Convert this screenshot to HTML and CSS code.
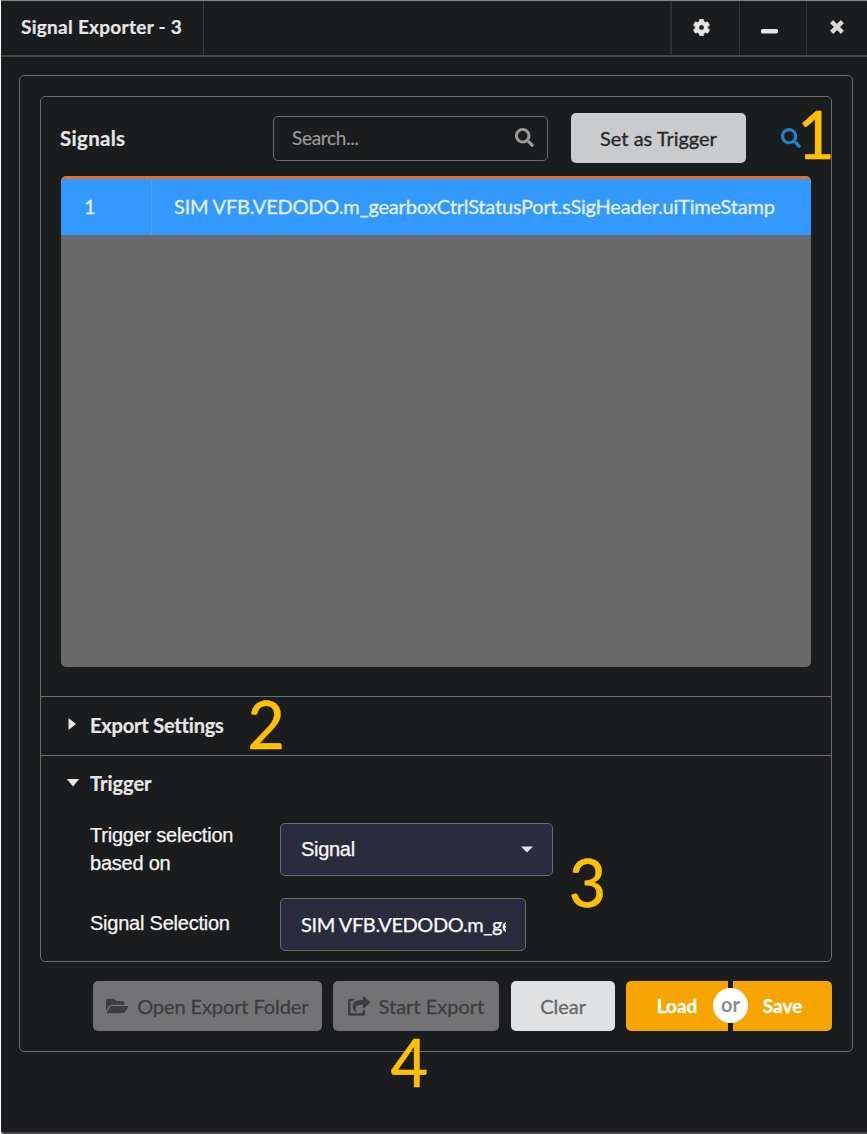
FILE: index.html
```html
<!DOCTYPE html>
<html lang="en">
<head>
<meta charset="utf-8">
<title>Signal Exporter - 3</title>
<link rel="stylesheet" href="styles.css">
</head>
<body>
<svg class="defs" width="0" height="0">
  <symbol id="search" viewBox="0 0 512 512"><path d="M505 442.700L405.300 343c-4.500-4.500-10.600-7-17-7H372c27.600-35.300 44-79.700 44-128C416 93.100 322.900 0 208 0S0 93.100 0 208s93.100 208 208 208c48.300 0 92.700-16.400 128-44v16.300c0 6.400 2.500 12.500 7 17l99.700 99.700c9.400 9.400 24.600 9.400 33.900 0l28.300-28.300c9.400-9.400 9.400-24.600.1-34zM208 336c-70.700 0-128-57.200-128-128 0-70.700 57.200-128 128-128 70.700 0 128 57.200 128 128 0 70.700-57.200 128-128 128z"/></symbol>
</svg>
<div class="window">
  <header class="titlebar">
    <div class="title"><span>Signal Exporter - 3</span></div>
    <div class="tool tool-settings"><svg width="17" height="17" viewBox="0 0 512 512"><path stroke="currentColor" stroke-width="22" d="M487.400 315.700l-42.600-24.600c4.300-23.200 4.300-47 0-70.200l42.600-24.600c4.900-2.800 7.100-8.600 5.500-14-11.100-35.600-30-67.800-54.700-94.600-3.800-4.100-10-5.100-14.800-2.300L380.800 110c-17.900-15.400-38.500-27.300-60.800-35.100V25.800c0-5.600-3.900-10.500-9.400-11.700-36.700-8.200-74.300-7.800-109.200 0-5.500 1.200-9.400 6.100-9.400 11.700V75c-22.200 7.900-42.800 19.800-60.800 35.100L88.700 85.500c-4.900-2.800-11-1.900-14.800 2.300-24.700 26.700-43.600 58.900-54.700 94.600-1.700 5.400.6 11.200 5.500 14L67.300 221c-4.300 23.200-4.300 47 0 70.200l-42.600 24.600c-4.900 2.800-7.100 8.600-5.500 14 11.100 35.600 30 67.800 54.700 94.600 3.800 4.100 10 5.100 14.800 2.300l42.600-24.600c17.900 15.400 38.500 27.300 60.800 35.100v49.200c0 5.600 3.900 10.500 9.400 11.700 36.700 8.200 74.300 7.800 109.200 0 5.500-1.200 9.400-6.100 9.400-11.700v-49.200c22.200-7.900 42.800-19.800 60.800-35.100l42.600 24.600c4.900 2.800 11 1.900 14.800-2.300 24.700-26.700 43.600-58.900 54.700-94.600 1.500-5.500-.7-11.300-5.600-14.100zM256 336c-44.100 0-80-35.900-80-80s35.900-80 80-80 80 35.900 80 80-35.900 80-80 80z"/></svg></div>
    <div class="tool tool-minimize"><svg width="17" height="17" viewBox="0 0 17 17"><rect x="0" y="11" width="17" height="4.500" rx="1.500"/></svg></div>
    <div class="tool tool-close"><svg width="14" height="14" viewBox="0 0 14 14"><path d="M3.200 3.200L10.800 10.800M10.800 3.200L3.200 10.800" fill="none" stroke="currentColor" stroke-width="4.400" stroke-linecap="square"/></svg></div>
  </header>

  <main class="panel">
    <div class="accordion">
      <section class="signals">
        <div class="signals-head">
          <h2 class="signals-label">Signals</h2>
          <div class="search"><span>Search...</span><svg width="19" height="19"><use href="#search"/></svg></div>
          <button class="btn btn-trigger">Set as Trigger</button>
          <svg class="find" width="20" height="20"><use href="#search"/></svg>
        </div>
        <div class="table">
          <div class="row">
            <div class="cell-index">1</div>
            <div class="cell-name"><span>SIM VFB.VEDODO.m_gearboxCtrlStatusPort.sSigHeader.uiTimeStamp</span></div>
          </div>
        </div>
      </section>
      <section class="export-settings">
        <svg class="caret" width="14" height="14" viewBox="0 0 14 14"><path d="M3.500 1L11 7L3.500 13Z"/></svg>
        <h3 class="heading heading-export">Export Settings</h3>
      </section>
      <section class="trigger">
        <div class="trigger-head">
          <svg class="caret" width="14" height="14" viewBox="0 0 14 14"><path d="M.8 3H13.200L7 10.500Z"/></svg>
          <h3 class="heading heading-trigger">Trigger</h3>
        </div>
        <div class="field">
          <label>Trigger selection<br>based on</label>
          <div class="select"><span>Signal</span><svg width="12" height="7" viewBox="0 0 12 7"><path d="M0 .5H12L6 6.500Z"/></svg></div>
        </div>
        <div class="field field-signal">
          <label>Signal Selection</label>
          <div class="input"><span>SIM VFB.VEDODO.m_ge</span></div>
        </div>
      </section>
    </div>
    <footer class="actions">
      <button class="btn btn-folder"><svg width="22" height="20" viewBox="0 0 576 512"><path d="M572.694 292.093L500.270 416.248A63.997 63.997 0 0 1 444.989 448H45.025c-18.523 0-30.064-20.093-20.731-36.093l72.424-124.155A64 64 0 0 1 152 256h399.964c18.523 0 30.064 20.093 20.730 36.093zM152 224h328v-48c0-26.510-21.490-48-48-48H272l-64-64H48C21.490 64 0 85.490 0 112v278.046l69.077-118.418C86.214 242.250 117.989 224 152 224z"/></svg><span>Open Export Folder</span></button>
      <button class="btn btn-start"><svg width="22" height="20" viewBox="0 0 576 512"><path d="M568.482 177.448L424.479 313.433C409.300 327.768 384 317.140 384 295.985v-71.963c-144.575.970-205.566 35.113-164.775 171.353 4.483 14.973-12.846 26.567-25.006 17.330C155.252 383.105 120 326.488 120 269.339c0-143.937 117.599-172.500 264-173.312V24.012c0-21.174 25.317-31.768 40.479-17.448l144.003 135.988c10.020 9.463 10.028 25.425 0 34.896zM384 379.128V448H64V128h50.916a11.990 11.990 0 0 0 8.648-3.693c14.953-15.568 32.237-27.890 51.014-37.676C185.708 80.830 181.584 64 169.033 64H48C21.490 64 0 85.490 0 112v352c0 26.510 21.490 48 48 48h352c26.510 0 48-21.490 48-48v-88.806c0-8.288-8.197-14.066-16.011-11.302a71.830 71.830 0 0 1-34.189 3.377c-7.270-1.046-13.800 4.514-13.800 11.859z"/></svg><span>Start Export</span></button>
      <button class="btn btn-clear">Clear</button>
      <div class="btn-pair">
        <button class="btn btn-load">Load</button>
        <button class="btn btn-save">Save</button>
        <div class="or"><span>or</span></div>
      </div>
    </footer>
  </main>

  <div class="callout callout-1">1</div>
  <div class="callout callout-2">2</div>
  <div class="callout callout-3">3</div>
  <div class="callout callout-4">4</div>
</div>
</body>
</html>
```
FILE: styles.css
```css
* { box-sizing: border-box; }
body { margin: 0; background: #fff; font-family: Lato, "Liberation Sans", sans-serif; font-size: 20px; color: #e6e6e6; font-variant-ligatures: none; }
.defs { display: block; position: absolute; }
svg { display: block; fill: currentColor; flex: none; }
h2, h3 { margin: 0; font-size: 20px; font-weight: 700; line-height: 28px; }
span, h2, h3, button { white-space: nowrap; }

.window { position: relative; width: 866px; height: 1134px; margin-left: 1px; background: #1b1c1d; border-top: 1px solid #858787; border-bottom: 2px solid #444446; border-bottom-left-radius: 3px; overflow: hidden; }
.titlebar { display: flex; height: 56px; border-bottom: 2px solid #474848; }
.title { width: 203px; padding: 12px 0 0 20px; border-right: 1px solid #373839; font-weight: 700; font-size: 19px; line-height: 28px; letter-spacing: .28px; -webkit-text-stroke: .2px; }
.tool { display: flex; border-left: 1px solid #323334; }
.tool-settings { width: 69px; margin-left: auto; border-left: 2px solid #303132; padding: 18px 0 0 21px; }
.tool-minimize { width: 67px; padding: 17px 0 0 21px; }
.tool-close { width: 61px; padding: 19px 0 0 23px; color: #d8d8d8; }

.panel { width: 834px; height: 977px; margin: 18px 0 0 18px; padding: 20px; border: 1px solid #6b6b6c; border-radius: 5px; }
.accordion { height: 866px; border: 1px solid #6b6b6c; border-radius: 5px; }
.signals { height: 600px; padding: 16px 20px 0 20px; border-bottom: 1px solid #6b6b6c; }
.signals-head { display: flex; height: 51px; }
.signals-label { width: 213px; padding-top: 11px; margin-left: -1px; font-size: 20.500px; letter-spacing: .3px; -webkit-text-stroke: .2px; }
.search { display: flex; justify-content: space-between; width: 275px; height: 45px; margin-top: 3px; padding: 11px 13px 0 18px; border: 1px solid #6b6b6c; border-radius: 5px; color: #999; }
.search span { line-height: 19px; font-size: 19px; letter-spacing: -.3px; -webkit-text-stroke: .2px; }
.btn { display: flex; align-items: center; justify-content: center; height: 50px; padding: 0; border: 0; border-radius: 5px; font: 400 20px/28px Lato, sans-serif; -webkit-text-stroke: .3px; }
.btn-trigger { width: 175px; margin: 0 0 0 23px; padding-bottom: 1px; background: #cacbcd; color: #272829; }
.find { margin: 15px 0 0 35px; color: #2280cb; }
.table { width: 750px; height: 491px; margin-top: 12px; background: #6a6a6a; border-top: 3px solid #e36f28; border-radius: 5px; overflow: hidden; }
.row { display: flex; height: 56px; background: #3399ff; color: #e3f1ff; line-height: 54px; -webkit-text-stroke: .3px; }
.cell-index { width: 91px; padding-left: 23px; border-right: 1px solid #4da4fb; }
.cell-name { padding-left: 22px; letter-spacing: -.2px; }

.export-settings { display: flex; height: 59px; padding: 14px 0 0 24px; border-bottom: 1px solid #6b6b6c; }
.heading { -webkit-text-stroke: .2px; }
.heading-export { letter-spacing: -.2px; }
.caret { margin: 6px 11px 0 0; }
.trigger { padding-top: 13px; }
.trigger-head { display: flex; padding-left: 25px; }
.trigger-head .caret { margin: 7px 10px 0 0; }
.field { display: flex; margin: 26px 0 0 49px; }
.field label { width: 190px; font: 400 20px/28px "Liberation Sans", sans-serif; letter-spacing: -.23px; color: #f5f5f5; margin-top: -2px; -webkit-text-stroke: .25px; }
.select, .input { display: flex; justify-content: space-between; height: 53px; padding: 0 19px 0 20px; border: 1px solid #6b6b6c; border-radius: 5px; background: #2a2c3e; color: #fafafa; line-height: 51px; -webkit-text-stroke: .25px; }
.select { width: 273px; font-family: "Liberation Sans", sans-serif; letter-spacing: -.3px; }
.select svg { margin-top: 22px; color: #e2e2e6; }
.field-signal { margin-top: 21px; }
.field-signal label { margin-top: 11px; }
.input { width: 246px; }
.input span { width: 205px; overflow: hidden; letter-spacing: -.4px; }

.trigger .field-signal { margin-top: 21px; }
.actions { display: flex; padding: 19px 0 0 53px; }
.btn-folder, .btn-start { background: #737375; color: #3c3d3e; gap: 9px; padding-bottom: 1px; }
.btn-folder { width: 229px; }
.btn-folder span { letter-spacing: -.1px; }
.btn-start { width: 167px; margin-left: 11px; }
.btn-clear { width: 104px; margin-left: 12px; background: #e0e1e2; color: #666768; padding-bottom: 1px; }
.btn-pair { position: relative; display: flex; gap: 5px; margin-left: 11px; }
.btn-load, .btn-save { background: #f6a400; color: #fff; font-weight: 700; font-size: 19px; }
.btn-load { width: 102px; border-radius: 5px 0 0 5px; }
.btn-save { width: 99px; border-radius: 0 5px 5px 0; }
.or { position: absolute; left: 87px; top: 7px; width: 35px; height: 35px; border-radius: 50%; background: #fff; color: #8c8c8c; text-align: center; font-weight: 700; line-height: 33px; }
.field:not(.field-signal) .select { margin-bottom: -1px; }
.field-signal { height: 53px; }

.callout { position: absolute; font: 400 74px/80px Carlito, Lato, sans-serif; color: #ffc000; -webkit-text-stroke: .4px; }
.callout-1 { left: 795px; top: 93px; }
.callout-2 { left: 246px; top: 683px; }
.callout-3 { left: 567px; top: 841px; }
.callout-4 { left: 389px; top: 1021px; }
```
